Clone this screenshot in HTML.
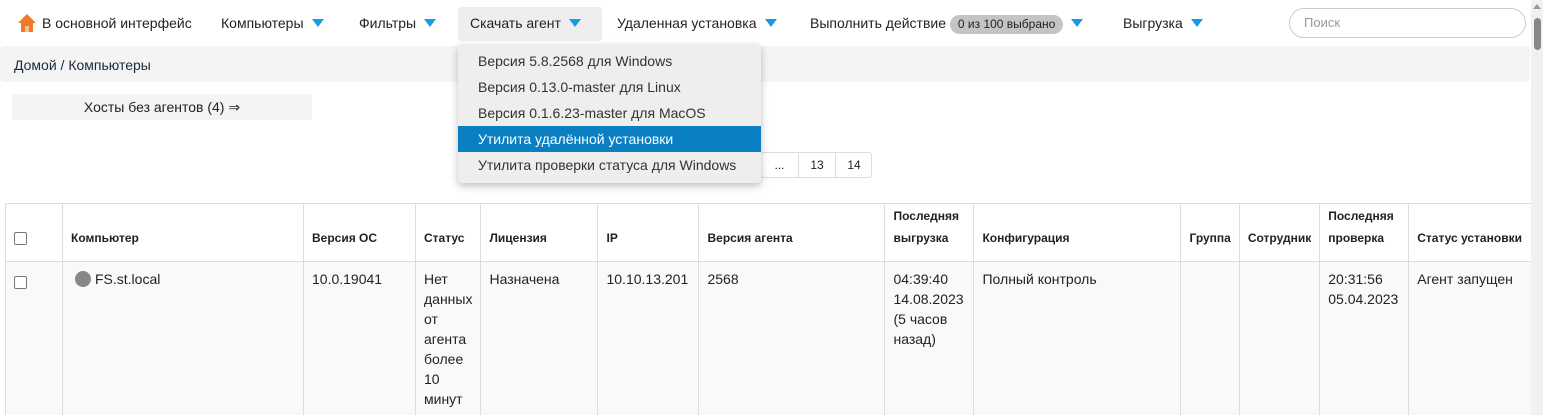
<!DOCTYPE html>
<html><head><meta charset="utf-8"><style>
*{box-sizing:border-box;margin:0;padding:0}
html,body{width:1543px;height:415px;overflow:hidden}
body{background:#fff;font-family:"Liberation Sans",sans-serif;color:#222;font-size:14px;position:relative}
.a{position:absolute;white-space:nowrap}
.tri{display:inline-block;width:0;height:0;border-left:6px solid transparent;border-right:6px solid transparent;border-top:8px solid #1e9be0;margin-left:8px;vertical-align:1px}
table{position:absolute;left:5px;top:203px;border-collapse:collapse;font-size:14px}
td,th{border:1px solid #ddd;vertical-align:top;text-align:left;padding:0 8px}
th{font-size:12px;font-weight:bold;vertical-align:bottom;padding-bottom:12px;line-height:22px;height:58px}
tbody td{background:#f9f9f9;height:156px;padding-top:7px;line-height:20px}
.cb{display:inline-block;width:13px;height:13px;border:1px solid #777;border-radius:2px;background:#fff}
.menu div{height:26px;line-height:26px;padding-left:20px}
</style></head><body>
<div class="a" style="left:17px;top:13px;width:20px;height:20px">
<svg width="20" height="20" viewBox="0 0 20 20"><path d="M10 1 L1 10 L4 10 L4 19 L16 19 L16 10 L19 10 Z" fill="#f07a2a"/><rect x="8" y="13" width="4" height="6" fill="#fff" opacity=".5"/></svg></div>
<div class="a" style="left:42px;top:15px">В основной интерфейс</div>
<div class="a" style="left:221px;top:15px">Компьютеры<span class="tri"></span></div>
<div class="a" style="left:359px;top:15px">Фильтры<span class="tri"></span></div>
<div class="a" style="left:458px;top:7px;width:144px;height:34px;background:#eee;border-radius:4px"></div>
<div class="a" style="left:470px;top:15px">Скачать агент<span class="tri"></span></div>
<div class="a" style="left:617px;top:15px">Удаленная установка<span class="tri"></span></div>
<div class="a" style="left:810px;top:15px">Выполнить действие <span style="display:inline-block;background:#c4c4c4;border-radius:10px;padding:0 8px;font-size:12px;line-height:19px">0 из 100 выбрано</span><span class="tri"></span></div>
<div class="a" style="left:1123px;top:15px">Выгрузка<span class="tri"></span></div>
<div class="a" style="left:1289px;top:8px;width:237px;height:30px;border:1px solid #ccc;border-radius:15px;padding-left:14px;line-height:28px;color:#999;font-size:13px">Поиск</div>
<div class="a" style="left:1531px;top:0;width:12px;height:415px;background:#f1f1f1;z-index:2"></div>
<div class="a" style="left:1534px;top:18px;width:7px;height:32px;background:#888;border-radius:4px;z-index:3"></div>
<div class="a" style="left:1533px;top:4px;width:0;height:0;border-left:4px solid transparent;border-right:4px solid transparent;border-bottom:5px solid #999;z-index:3"></div>
<div class="a" style="left:0;top:46px;width:1530px;height:36px;background:#f4f4f4;border-radius:4px"></div>
<div class="a" style="left:14px;top:57px;color:#1a2a3a">Домой / Компьютеры</div>
<div class="a" style="left:12px;top:94px;width:300px;height:26px;background:#f4f4f4;border-radius:3px;text-align:center;line-height:26px">Хосты без агентов (4) ⇒</div>
<div class="a" style="left:760px;top:152px;width:112px;height:26px;border:1px solid #ddd;border-radius:3px;font-size:12px;line-height:24px">
<span style="position:absolute;left:0;width:38px;text-align:center;border-right:1px solid #ddd">...</span>
<span style="position:absolute;left:38px;width:37px;text-align:center;border-right:1px solid #ddd">13</span>
<span style="position:absolute;left:75px;width:36px;text-align:center">14</span></div>
<div class="a menu" style="left:458px;top:44px;width:303px;height:139px;background:#eee;border-radius:4px;box-shadow:0 3px 8px rgba(0,0,0,.25);padding-top:4px;color:#333;z-index:1">
<div>Версия 5.8.2568 для Windows</div>
<div>Версия 0.13.0-master для Linux</div>
<div>Версия 0.1.6.23-master для MacOS</div>
<div style="background:#0a7fc2;color:#fff">Утилита удалённой установки</div>
<div>Утилита проверки статуса для Windows</div>
</div>
<table>
<thead><tr>
<th style="width:57px;padding-bottom:9px"><span class="cb"></span></th>
<th style="width:241px">Компьютер</th>
<th style="width:112px">Версия ОС</th>
<th style="width:65px">Статус</th>
<th style="width:117px">Лицензия</th>
<th style="width:101px">IP</th>
<th style="width:186px">Версия агента</th>
<th style="width:89px">Последняя<br>выгрузка</th>
<th style="width:207px">Конфигурация</th>
<th style="width:58px">Группа</th>
<th style="width:78px">Сотрудник</th>
<th style="width:89px">Последняя<br>проверка</th>
<th style="width:125px">Статус установки</th>
</tr></thead>
<tbody><tr>
<td style="padding-top:12px"><span class="cb"></span></td>
<td><span style="display:inline-block;width:16px;height:16px;border-radius:50%;background:#888;vertical-align:-3px;margin-left:4px;margin-right:4px"></span>FS.st.local</td>
<td>10.0.19041</td>
<td>Нет данных от агента более 10 минут</td>
<td>Назначена</td>
<td>10.10.13.201</td>
<td>2568</td>
<td>04:39:40 14.08.2023 (5 часов назад)</td>
<td>Полный контроль</td>
<td></td><td></td>
<td>20:31:56 05.04.2023</td>
<td>Агент запущен</td>
</tr></tbody></table>
</body></html>
